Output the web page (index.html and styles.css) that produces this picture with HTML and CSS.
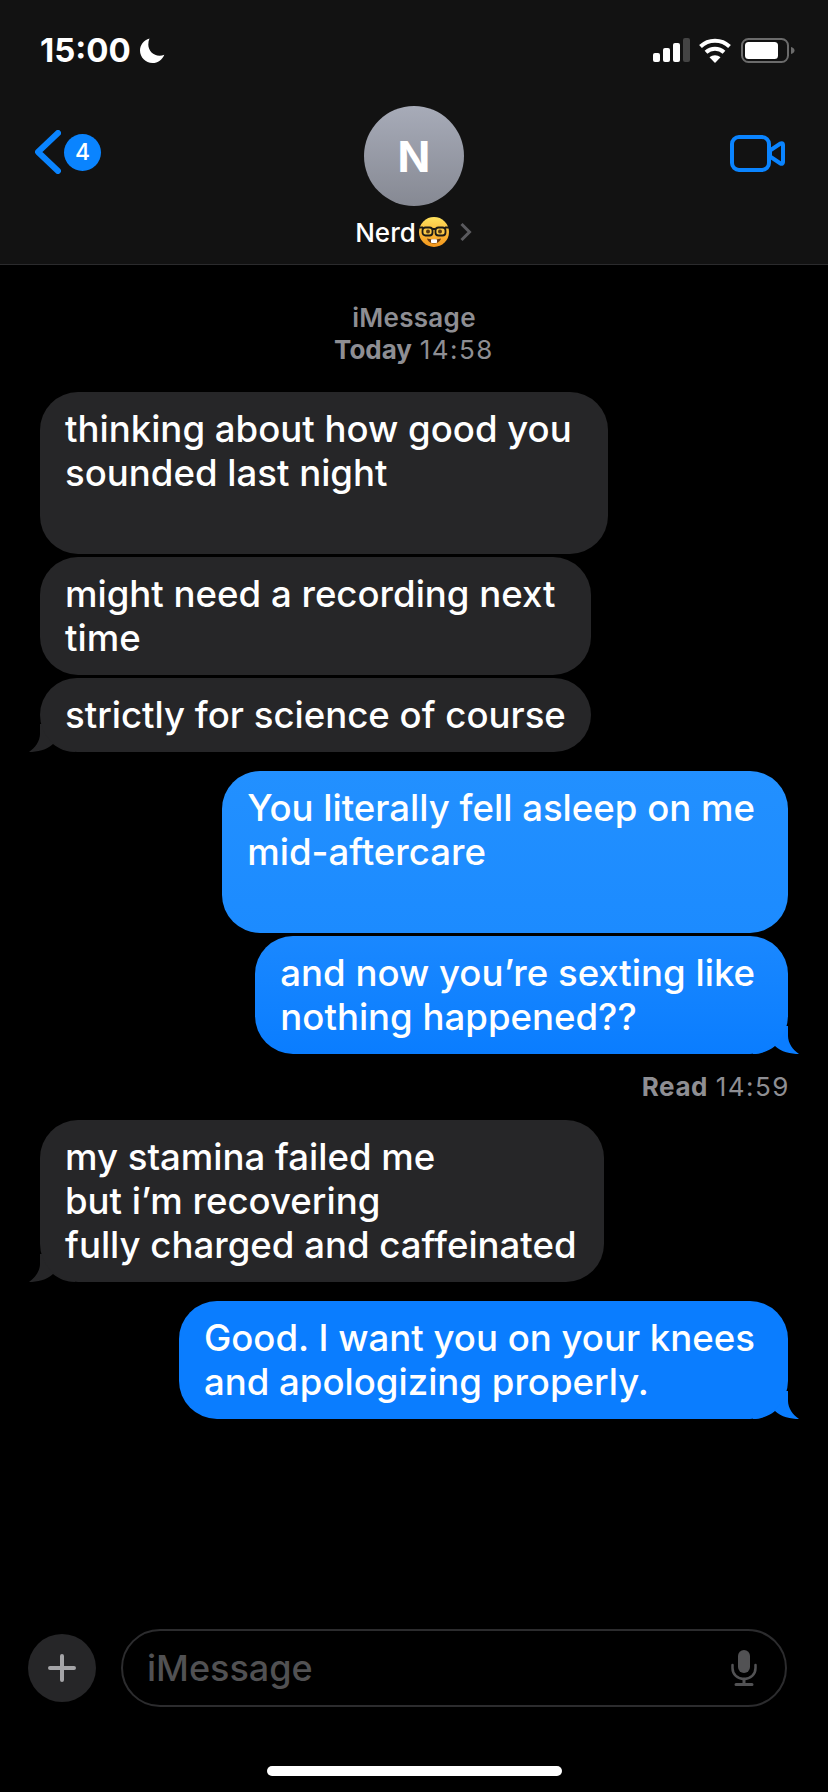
FILE: index.html
```html
<!DOCTYPE html>
<html lang="en">
<head>
    <meta charset="UTF-8">
    <meta name="viewport" content="width=device-width, initial-scale=1.0">
    <title>Messages</title>
    <link rel="stylesheet" href="styles.css">
</head>
<body>
    <header class="top">
        <div class="status">
            <div class="status-left">
                <span class="clock">15:00</span>
                <svg class="moon" viewBox="0 0 25 25"><path d="M9.500 .5C3.800 2 0 7 0 12.600 0 19.500 5.600 25 12.500 25c5.400 0 10-3.400 11.800-8.300-1.500 .7-3.100 1-4.800 1C13.300 17.700 8.300 12.700 8.300 6.500c0-2.200 .4-4.200 1.200-6z" fill="#fff"/></svg>
            </div>
            <div class="status-right">
                <svg class="signal" viewBox="0 0 37 24">
                    <rect x="0" y="15" width="7" height="9" rx="2" fill="#fff"/>
                    <rect x="10" y="10" width="7" height="14" rx="2" fill="#fff"/>
                    <rect x="20" y="5" width="7" height="19" rx="2" fill="#fff"/>
                    <rect x="30" y="0" width="7" height="24" rx="2" fill="#444"/>
                </svg>
                <svg class="wifi" viewBox="0 0 32 25">
                    <path d="M1.500 8.500C9.500 .7 22.500 .7 30.500 8.500" fill="none" stroke="#fff" stroke-width="4"/>
                    <path d="M7 14.200c5-4.700 13-4.700 18 0" fill="none" stroke="#fff" stroke-width="4"/>
                    <path d="M16 25l-5.500-5.700c3-2.800 8-2.800 11 0z" fill="#fff"/>
                </svg>
                <svg class="battery" viewBox="0 0 54 25">
                    <rect x="1" y="1" width="46" height="23" rx="6.500" fill="none" stroke="#6b6b6b" stroke-width="2"/>
                    <rect x="4" y="4" width="33" height="17" rx="3.500" fill="#fff"/>
                    <path d="M50 9c2 .4 3.500 1.800 3.500 3.500S52 15.600 50 16z" fill="#6b6b6b"/>
                </svg>
            </div>
        </div>
        <div class="nav">
            <div class="back">
                <svg class="chevron" viewBox="0 0 26 44"><path d="M23 3L3 22l20 19" fill="none" stroke="#0a84ff" stroke-width="6" stroke-linecap="round" stroke-linejoin="round"/></svg>
                <span class="badge">4</span>
            </div>
            <div class="contact">
                <div class="avatar">N</div>
                <div class="contact-name">
                    <span>Nerd</span>
                    <svg class="nerd" viewBox="0 0 30 30">
                        <defs>
                            <linearGradient id="face" x1="0" y1="0" x2="0" y2="1">
                                <stop offset="0" stop-color="#ffe25e"/>
                                <stop offset="1" stop-color="#f4951a"/>
                            </linearGradient>
                        </defs>
                        <circle cx="15" cy="15" r="15" fill="url(#face)"/>
                        <rect x="3.500" y="10.500" width="10" height="8" rx="3" fill="#f7c748" stroke="#1c1a16" stroke-width="1.800"/>
                        <rect x="16.500" y="10.500" width="10" height="8" rx="3" fill="#f7c748" stroke="#1c1a16" stroke-width="1.800"/>
                        <path d="M13 12h4M0 10.500h4M26 10.500h4" stroke="#1c1a16" stroke-width="1.800"/>
                        <circle cx="9" cy="14.500" r="2" fill="#5b3a10"/>
                        <circle cx="21" cy="14.500" r="2" fill="#5b3a10"/>
                        <path d="M8 21.500c4.500 1.300 9.500 1.300 14 0-1 3.500-4 5-7 5s-6-1.500-7-5z" fill="#6a3a12"/>
                        <rect x="12" y="22.300" width="6" height="3.700" rx=".8" fill="#fff"/>
                    </svg>
                    <svg class="name-arrow" viewBox="0 0 14 20"><path d="M2.500 2l8 8-8 8" fill="none" stroke="#5a5a5e" stroke-width="3"/></svg>
                </div>
            </div>
            <svg class="video" viewBox="0 0 55 37">
                <rect x="2" y="2" width="37" height="33" rx="7" fill="none" stroke="#0a84ff" stroke-width="4"/>
                <path d="M40 15.500l10.500-7c1.300-.8 2.500 0 2.500 1.200v17.600c0 1.200-1.200 2-2.500 1.200l-10.500-7z" fill="none" stroke="#0a84ff" stroke-width="4" stroke-linejoin="round"/>
            </svg>
        </div>
    </header>

    <main class="messages">
        <div class="stamp">
            <div class="stamp-service">iMessage</div>
            <div><b>Today</b> <span class="time">14:58</span></div>
        </div>

        <div class="group">
            <div class="bubble in wide">thinking about how good you<br>sounded last night<br>&nbsp;</div>
            <div class="bubble in wide">might need a recording next<br>time</div>
            <div class="bubble in">strictly for science of course
                <svg class="tail tail-in" viewBox="0 0 46 28"><path d="M11 0v10C11 17 6 24 0 28c8 0 18-2 24-8 6 5 14 8 22 8V0z"/></svg>
            </div>
        </div>

        <div class="group">
            <div class="bubble out wide first">You literally fell asleep on me<br>mid-aftercare<br>&nbsp;</div>
            <div class="bubble out wide second">and now you’re sexting like<br>nothing happened??
                <svg class="tail tail-out" viewBox="0 0 46 28"><path d="M11 0v10C11 17 6 24 0 28c8 0 18-2 24-8 6 5 14 8 22 8V0z"/></svg>
            </div>
            <div class="read"><b>Read</b> <span class="time">14:59</span></div>
        </div>

        <div class="group">
            <div class="bubble in roomy">my stamina failed me<br>but i’m recovering<br>fully charged and caffeinated
                <svg class="tail tail-in" viewBox="0 0 46 28"><path d="M11 0v10C11 17 6 24 0 28c8 0 18-2 24-8 6 5 14 8 22 8V0z"/></svg>
            </div>
        </div>

        <div class="group">
            <div class="bubble out wide">Good. I want you on your knees<br>and apologizing properly.
                <svg class="tail tail-out" viewBox="0 0 46 28"><path d="M11 0v10C11 17 6 24 0 28c8 0 18-2 24-8 6 5 14 8 22 8V0z"/></svg>
            </div>
        </div>
    </main>

    <footer class="composer">
        <div class="plus">
            <svg viewBox="0 0 28 28"><path d="M14 2v24M2 14h24" stroke="#a5a5a8" stroke-width="4" stroke-linecap="round"/></svg>
        </div>
        <div class="field">
            <span class="placeholder">iMessage</span>
            <svg class="mic" viewBox="0 0 26 36">
                <rect x="7" y="0" width="12" height="23" rx="6" fill="#525254"/>
                <path d="M1.500 15v3c0 6.500 5 11 11.500 11s11.500-4.500 11.500-11v-3" fill="none" stroke="#525254" stroke-width="2.500" stroke-linecap="round"/>
                <path d="M13 29v5M5 34.500h16" stroke="#525254" stroke-width="3" stroke-linecap="round"/>
            </svg>
        </div>
    </footer>
    <div class="home-wrap"><div class="home-bar"></div></div>
</body>
</html>
```

FILE: styles.css
```css
* {
    box-sizing: border-box;
}
body {
    margin: 0;
    width: 828px;
    height: 1792px;
    background: #000;
    color: #fff;
    font-family: Inter, 'Liberation Sans', sans-serif;
    display: flex;
    flex-direction: column;
    overflow: hidden;
}
svg {
    display: block;
}

/* top bar */
.top {
    height: 265px;
    background: #121212;
    border-bottom: 1px solid #2b2b2d;
    flex-shrink: 0;
}
.status {
    height: 88px;
    padding: 32px 33px 0 40px;
    display: flex;
    justify-content: space-between;
}
.status-left {
    display: flex;
    align-items: center;
    height: 36px;
    gap: 9px;
}
.clock {
    font-size: 33px;
    font-weight: 700;
    line-height: 36px;
}
.moon {
    width: 25px;
    height: 25px;
}
.status-right {
    display: flex;
    align-items: center;
    height: 36px;
    gap: 10px;
}
.signal {
    width: 37px;
    height: 24px;
    margin-right: -1px;
}
.wifi {
    width: 32px;
    height: 25px;
}
.battery {
    width: 54px;
    height: 25px;
}
.nav {
    display: grid;
    grid-template-columns: 1fr auto 1fr;
    padding: 18px 43px 0;
    height: 176px;
}
.back {
    display: flex;
    align-items: center;
    gap: 3px;
    height: 92px;
    margin-left: -8px;
}
.chevron {
    width: 26px;
    height: 44px;
}
.badge {
    width: 37px;
    height: 37px;
    border-radius: 50%;
    background: #0a84ff;
    font-size: 23px;
    font-weight: 500;
    line-height: 37px;
    text-align: center;
}
.contact {
    display: flex;
    flex-direction: column;
    align-items: center;
}
.avatar {
    width: 100px;
    height: 100px;
    border-radius: 50%;
    background: linear-gradient(#a7abb8, #868993);
    font-size: 43px;
    font-weight: 700;
    line-height: 100px;
    text-align: center;
}
.contact-name {
    display: flex;
    align-items: center;
    margin-top: 11px;
    height: 30px;
    font-size: 26px;
    font-weight: 500;
}
.nerd {
    width: 30px;
    height: 30px;
    margin-left: 3px;
}
.name-arrow {
    width: 14px;
    height: 20px;
    margin-left: 10px;
}
.video {
    width: 55px;
    height: 37px;
    margin-top: 29px;
    justify-self: end;
}

/* conversation */
.messages {
    flex: 1;
    padding: 37px 40px 0;
    display: flex;
    flex-direction: column;
    gap: 19px;
}
.stamp {
    text-align: center;
    font-size: 26px;
    line-height: 32px;
    color: #8e8e93;
    letter-spacing: .3px;
    margin-bottom: 7px;
}
.stamp-service {
    font-weight: 600;
}
.stamp b {
    font-weight: 700;
    letter-spacing: 0;
}
.read b {
    font-weight: 700;
    letter-spacing: .6px;
}
.time {
    letter-spacing: 1.5px;
}
.group {
    display: flex;
    flex-direction: column;
    gap: 3px;
}
.bubble {
    position: relative;
    width: fit-content;
    padding: 15px 25px;
    border-radius: 38px;
    font-size: 36.6px;
    line-height: 44px;
    font-weight: 500;
    white-space: nowrap;
}
.wide {
    padding-right: 33px;
}
.in.wide {
    padding-right: 36px;
}
.roomy {
    padding-right: 27px;
}
.in {
    background: #262628;
}
.out {
    align-self: flex-end;
    background: #0a7dff;
}
.out.first {
    background: linear-gradient(#2290ff, #1c8bff);
}
.out.second {
    background: linear-gradient(#1a88ff, #0a7dff);
}
.tail {
    position: absolute;
    bottom: 0;
    z-index: -1;
    width: 46px;
    height: 28px;
}
.tail-in {
    left: -11px;
    fill: #262628;
}
.tail-out {
    right: -11px;
    fill: #0a7dff;
    transform: scaleX(-1);
}
.read {
    align-self: flex-end;
    margin: 14px -2px -2px 0;
    font-size: 26px;
    line-height: 32px;
    color: #8e8e93;
    letter-spacing: .3px;
}

/* input */
.composer {
    display: flex;
    align-items: center;
    gap: 25px;
    height: 78px;
    padding: 0 41px 0 28px;
    flex-shrink: 0;
}
.plus {
    width: 68px;
    height: 68px;
    border-radius: 50%;
    background: #262628;
    display: flex;
    align-items: center;
    justify-content: center;
}
.plus svg {
    width: 28px;
    height: 28px;
}
.field {
    flex: 1;
    height: 78px;
    border: 2px solid #2c2c2e;
    border-radius: 39px;
    display: flex;
    align-items: center;
    justify-content: space-between;
    padding: 0 28px 0 24px;
}
.placeholder {
    font-size: 36px;
    color: #515153;
    font-weight: 500;
}
.mic {
    width: 26px;
    height: 36px;
}
.home-wrap {
    height: 85px;
    padding-top: 59px;
    flex-shrink: 0;
}
.home-bar {
    width: 295px;
    height: 10px;
    margin: 0 auto;
    border-radius: 5px;
    background: #fff;
}
```
